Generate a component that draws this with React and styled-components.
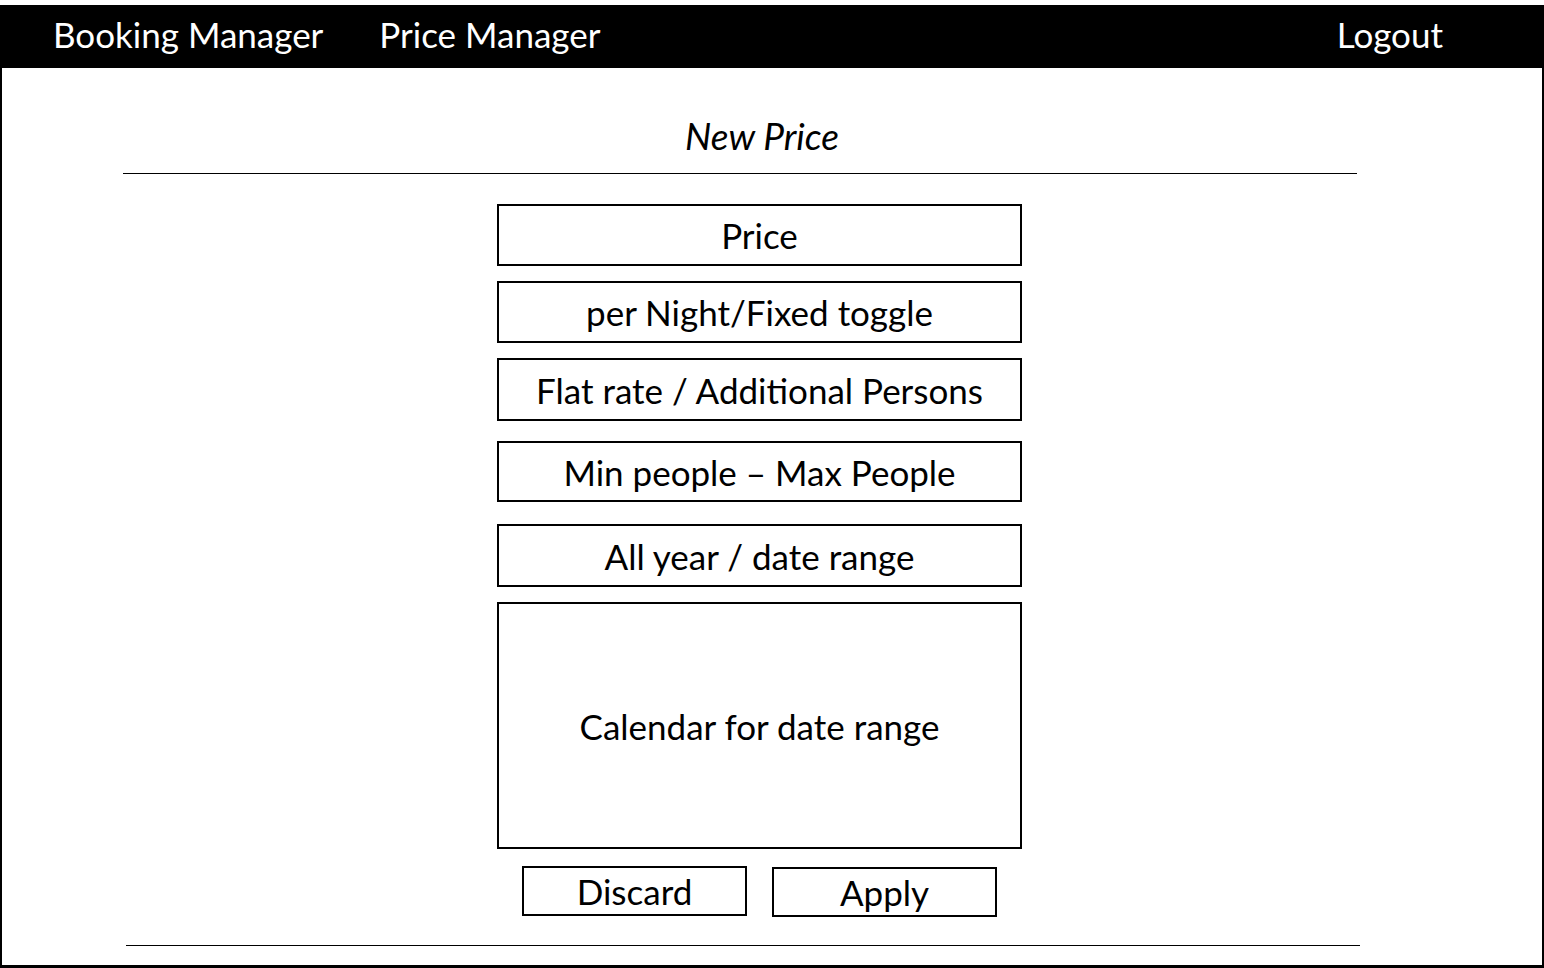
import React from 'react';
import styled, { createGlobalStyle } from 'styled-components';

const GlobalStyle = createGlobalStyle`
    html, body {
        margin: 0;
        padding: 0;
        background: #fff;
    }
    body {
        font-family: Lato, "Liberation Sans", sans-serif;
        color: #000;
    }
    * {
        box-sizing: border-box;
    }
`

const fields = [
    { label: 'Price', top: 30, height: 62 },
    { label: 'per Night/Fixed toggle', top: 15, height: 62 },
    { label: 'Flat rate / Additional Persons', top: 15, height: 63 },
    { label: 'Min people \u2013 Max People', top: 20, height: 61 },
    { label: 'All year / date range', top: 22, height: 63 },
    { label: 'Calendar for date range', top: 15, height: 247 },
]

function App () {
    return (
        <>
            <GlobalStyle />
            <Page>
                <Frame>
{/* top navigation */}
                    <NavBar>
                        <NavLink>Booking Manager</NavLink>
                        <NavLink>Price Manager</NavLink>
                        <NavLink className="right">Logout</NavLink>
                    </NavBar>

{/* form */}
                    <Main>
                        <Title>New Price</Title>
                        <Rule />
                        <Form>
                            { fields.map((item) => {
                                return (
                                    <Field key={item.label} top={item.top} height={item.height}>
                                        { item.label }
                                    </Field>
                                )
                            }) }
                            <Buttons>
                                <Button>Discard</Button>
                                <Button low>Apply</Button>
                            </Buttons>
                        </Form>
                        <Rule bottom />
                    </Main>
                </Frame>
            </Page>
        </>
    )
}

const Page = styled.div`
    width: 1544px;
    height: 968px;
    padding-top: 5px;
`

const Frame = styled.div`
    height: 963px;
    border: 2px solid #000;
    border-top: none;
    border-bottom-width: 3px;
    display: flex;
    flex-direction: column;
`

const NavBar = styled.nav`
    height: 63px;
    background: #000;
    display: flex;
    align-items: center;
    margin: 0 -2px;
    padding: 0 101px 4px 53px;
    gap: 56px;

    .right {
        margin-left: auto;
    }
`

const NavLink = styled.span`
    color: #fff;
    font-size: 35px;
    line-height: 1;
    cursor: pointer;
`

const Main = styled.main`
    flex: 1;
    display: flex;
    flex-direction: column;
    align-items: flex-start;
    padding-left: 121px;
`

const Title = styled.h1`
    width: 1234px;
    margin: 48px 0 0;
    padding-left: 44px;
    text-align: center;
    font-size: 37px;
    font-weight: 400;
    font-style: italic;
    line-height: 40px;
`

const Rule = styled.div`
    width: 1234px;
    height: 1px;
    background: #000;
    margin-top: ${props => props.bottom ? '28px' : '17px'};
    margin-left: ${props => props.bottom ? '3px' : '0'};
`

const Form = styled.section`
    margin-left: 374px;
    width: 525px;
    display: flex;
    flex-direction: column;
`

const Field = styled.div`
    margin-top: ${props => props.top}px;
    height: ${props => props.height}px;
    border: 2px solid #000;
    display: flex;
    align-items: center;
    justify-content: center;
    font-size: 35px;
`

const Buttons = styled.div`
    display: flex;
    justify-content: center;
    gap: 25px;
    margin-top: 17px;
`

const Button = styled.button`
    width: 225px;
    height: 50px;
    margin-top: ${props => props.low ? '1px' : '0'};
    border: 2px solid #000;
    background: #fff;
    font-family: Lato, "Liberation Sans", sans-serif;
    font-size: 35px;
    color: #000;
    padding: 0;
    cursor: pointer;
`

export default App
